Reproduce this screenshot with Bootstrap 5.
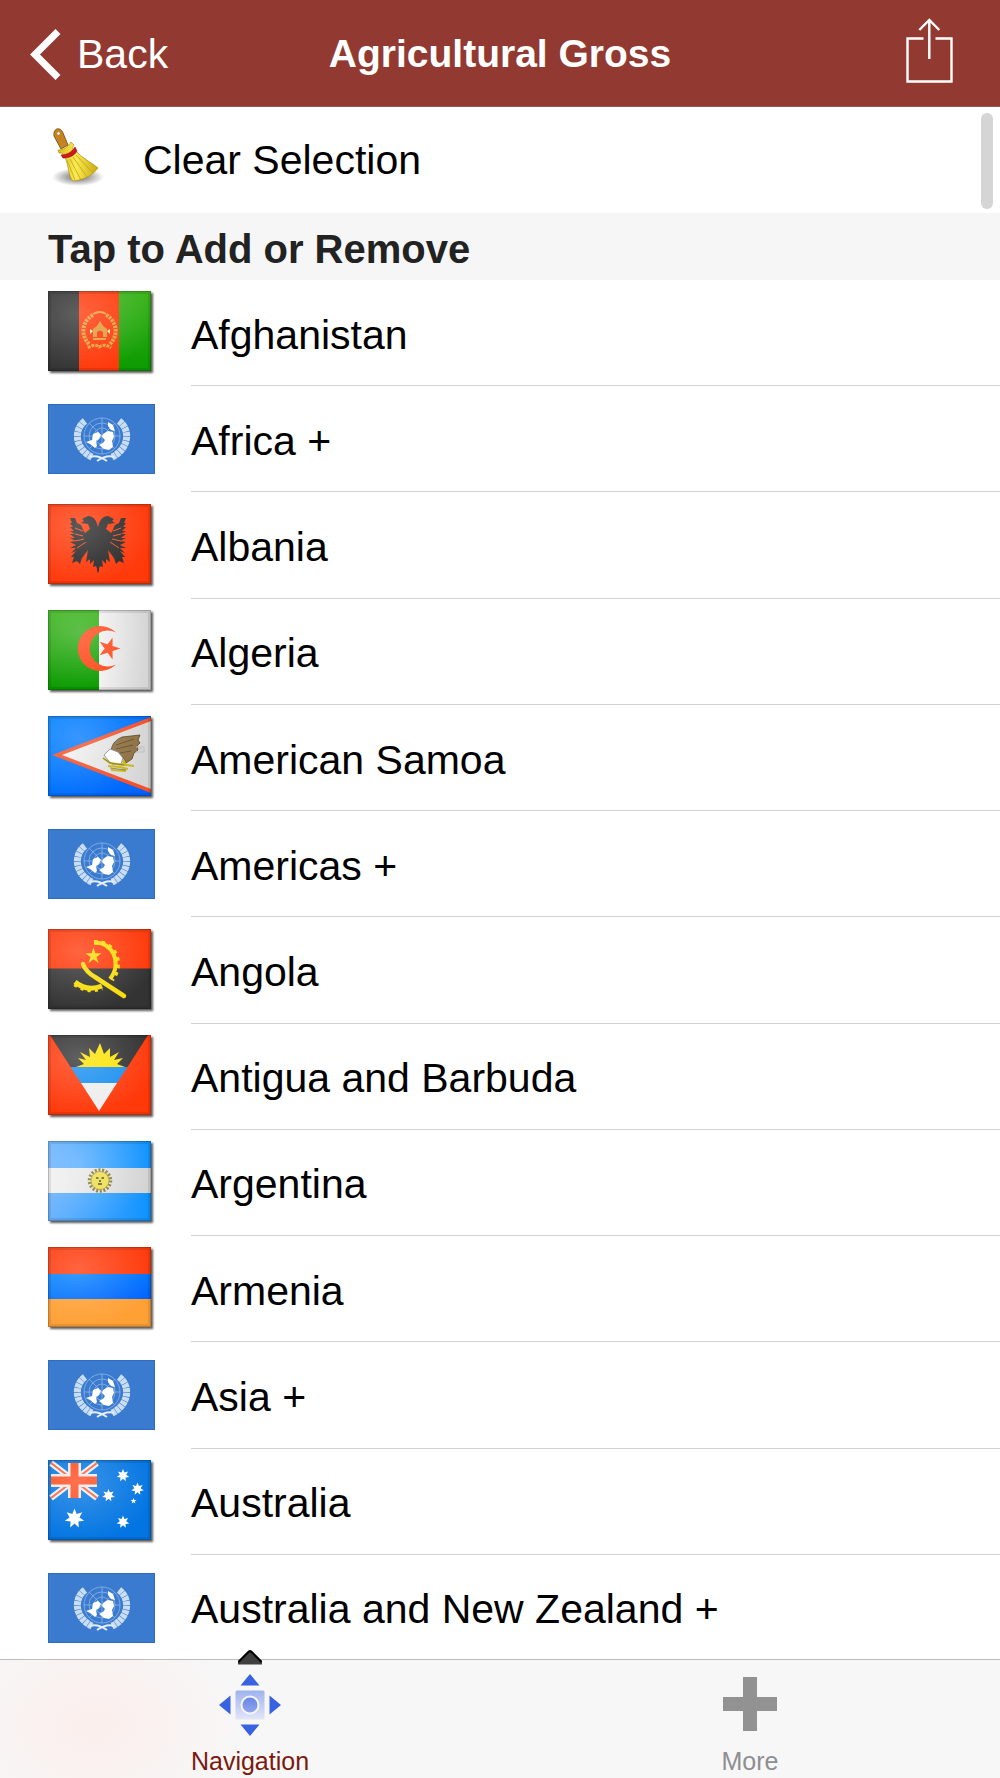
<!DOCTYPE html>
<html lang="en">
<head>
<meta charset="utf-8">
<meta name="viewport" content="width=device-width, initial-scale=1">
<title>Agricultural Gross</title>
<link href="https://cdn.jsdelivr.net/npm/bootstrap@5.3.0/dist/css/bootstrap.min.css" rel="stylesheet">
<style>
  body { font-family: "Liberation Sans", Arial, sans-serif; font-size: 41px; line-height: 48px; color: #000; background: #fff; padding-bottom: 117px; }
  .top-bar { height: 107px; background: #923a31; border-bottom: 1px solid #8f5a53; padding: 2px 30px 0; }
  .top-bar a, .top-bar button { color: #fff; }
  .top-bar h1 { font-size: 39px; line-height: 48px; color: #fff; }
  .share-button { margin: 0 17px 6px 0; }
  .clear-row { height: 106px; padding: 0 48px; gap: 36px; font: inherit; }
  .clear-row svg { margin-left: 4px; }
  .scroll-thumb { top: 6px; right: 7px; width: 12px; height: 96px; background: #d5d5d5; }
  .section-title { height: 67px; padding: 4px 48px 0; background: #f6f6f6; color: #222; font-size: 40px; line-height: 48px; }
  .country { gap: 36px; padding: 0 0 0 48px; min-height: 92px; border: 0; color: #000; background: #fff; }
  .country-name { padding-top: 4px; border-bottom: 1px solid #d2d1d5; }
  .flag { width: 107px; height: 84px; }
  .flag-art { filter: drop-shadow(2px 2px 1px rgba(0,0,0,.65)); }
  .tab-bar { background: radial-gradient(ellipse 150px 110px at 95px 65px, #fbeeec, rgba(251,238,236,0)), #f7f7f7; border-top: 1px solid #bcbcbc; }
  .tab-item { padding: 14px 0 2px; gap: 10px; font-size: 25px; line-height: 30px; color: #8e8e93; }
  .tab-item.active { color: #7b1a10; }
  .tab-caret { top: -10px; left: 50%; margin-left: -12px; }
</style>
<script src="https://cdn.jsdelivr.net/npm/bootstrap@5.3.0/dist/js/bootstrap.bundle.min.js"></script>
</head>
<body class="d-flex flex-column min-vh-100">

<!-- Shared flag parts -->
<svg width="0" height="0" class="position-absolute" aria-hidden="true">
  <defs>
    <radialGradient id="shine" cx=".3" cy=".28" r=".75">
      <stop offset="0" stop-color="#fff" stop-opacity=".22"/><stop offset="1" stop-color="#fff" stop-opacity="0"/>
    </radialGradient>
    <linearGradient id="greenFill" x1="0" y1="0" x2="0" y2="1"><stop offset="0" stop-color="#3cb41c"/><stop offset="1" stop-color="#0a9a00"/></linearGradient>
    <linearGradient id="skyFill"><stop offset="0" stop-color="#6db4ff"/><stop offset="1" stop-color="#0d92ff"/></linearGradient>
    <linearGradient id="blueFill" x1="0" y1="0" x2="1" y2="1"><stop offset="0" stop-color="#0082ff"/><stop offset="1" stop-color="#0062ff"/></linearGradient>
    <linearGradient id="silverFill"><stop offset="0" stop-color="#f2f2f2"/><stop offset="1" stop-color="#d2d2d2"/></linearGradient>
    <symbol id="gloss" viewBox="0 0 103 80">
      <rect width="103" height="80" fill="url(#shine)"/>
      <rect x="1.5" y="1.5" width="100" height="77" fill="none" stroke="#000" stroke-opacity=".09" stroke-width="3"/>
      <rect x=".5" y=".5" width="102" height="79" fill="none" stroke="#000" stroke-opacity=".18"/>
    </symbol>
    <polygon id="star5" points="0,-10 2.2,-3.1 9.5,-3.1 3.6,1.2 5.9,8.1 0,3.8 -5.9,8.1 -3.6,1.2 -9.5,-3.1 -2.2,-3.1"/>
    <polygon id="star7" points="0,-10 2.2,-4.5 7.8,-6.2 4.9,-1.1 9.7,2.2 3.9,3.1 4.3,9 0,5 -4.3,9 -3.9,3.1 -9.7,2.2 -4.9,-1.1 -7.8,-6.2 -2.2,-4.5"/>
    <symbol id="un" viewBox="0 0 107 84">
      <rect y="7" width="107" height="70" fill="#3a7bd0"/>
      <rect x=".5" y="7.500" width="106" height="69" fill="none" stroke="#2f6cc0"/>
      <g fill="none" stroke="#a9c8ee" stroke-width=".8" opacity=".75">
        <circle cx="54" cy="39" r="18"/><circle cx="54" cy="39" r="13"/><circle cx="54" cy="39" r="8"/>
        <path d="M36 39h36M54 21v36M41 26l26 26M67 26L41 52"/>
      </g>
      <g fill="none" stroke="#e3eefb">
        <path d="M37 24C25 33 27 52 44 60M71 24C83 33 81 52 64 60" stroke-width="7" stroke-dasharray="4 .5" opacity=".85"/>
        <path d="M42 60c6-2 11 0 17 4M66 60c-6-2-11 0-17 4" stroke-width="2"/>
      </g>
      <path fill="#fff" d="M38 45l6-2 1-6 5-2 3 3-2 4-3 2 1 5-2 2-5-4zM55 37l5-3 5 1 1 5-2 4 1 6-4 3-5-1-5-4 4-2 2-3-3-3zM60 25l5 3 2 6-4-1-3-4z"/>
    </symbol>
  </defs>
</svg>

<header class="top-bar d-flex align-items-center">
  <div class="col d-flex">
    <a href="#" class="d-flex align-items-center text-decoration-none">
      <svg width="31" height="51" viewBox="0 0 31 51" fill="none" stroke="#fff" stroke-width="7" aria-hidden="true"><path d="M28 2.500L5 25.500 28 48.500"/></svg>
      <span class="ms-3 ps-0">Back</span>
    </a>
  </div>
  <h1 class="fw-bold m-0 text-nowrap">Agricultural Gross</h1>
  <div class="col d-flex justify-content-end">
    <button type="button" class="share-button btn p-0 border-0 d-flex" aria-label="Share">
      <svg width="47" height="66" viewBox="0 0 47 66" fill="none" stroke="#fff" stroke-width="2.400"><path d="M17.500 20.500H1.500V63.500H45.500V20.500H29.500M23.300 41V2M13.300 12L23.300 2l10 10"/></svg>
    </button>
  </div>
</header>

<div class="position-relative">
  <button type="button" class="clear-row btn rounded-0 border-0 w-100 d-flex align-items-center text-start bg-white text-black">
    <svg width="55" height="64" viewBox="0 0 55 64" aria-hidden="true">
      <defs>
        <radialGradient id="floor"><stop offset="0" stop-color="#000" stop-opacity=".6"/><stop offset="1" stop-color="#000" stop-opacity="0"/></radialGradient>
        <linearGradient id="straw"><stop offset="0" stop-color="#d9bd17"/><stop offset=".45" stop-color="#fbea50"/><stop offset="1" stop-color="#c8a90c"/></linearGradient>
      </defs>
      <ellipse cx="26" cy="49" rx="26" ry="9" fill="url(#floor)"/>
      <path d="M2 8C1 -1 9 -1 11 5l5 12-7 4z" fill="#c58424" stroke="#8b5a14"/>
      <circle cx="6.500" cy="5.500" r="1.300" fill="#fff"/>
      <path d="M6 22c6 0 10-3 13-8l3 3-2 3 5 4c5 6 14 10 21 16-5 7-14 12-25 13-5-5-4-15-8-24l-3-4H7z" fill="url(#straw)" stroke="#b0921a" stroke-width=".7"/>
      <path d="M9 27c6 0 11-3 14-8l2 4c-3 5-8 7-14 7z" fill="#d3161c" stroke="#8e0d10" stroke-width=".6"/>
      <path d="M15 32l8 20M18 31l11 21M21 29l14 20M24 27l17 18" stroke="#b99c18" stroke-width=".7" fill="none"/>
    </svg>
    <span>Clear Selection</span>
  </button>
  <div class="scroll-thumb position-absolute rounded-pill"></div>
</div>

<h2 class="section-title fw-bold m-0 d-flex align-items-center">Tap to Add or Remove</h2>

<main class="list-group list-group-flush rounded-0 flex-fill">
  <button type="button" class="country list-group-item list-group-item-action d-flex flex-fill align-items-center">
    <svg class="flag flag-art flex-shrink-0" viewBox="0 0 107 84" aria-hidden="true">
      <rect width="32" height="80" fill="#333"/><rect x="31" width="41" height="80" fill="#ff390a"/><rect x="71" width="32" height="80" fill="url(#greenFill)"/>
      <g fill="none" stroke="#e3a13c">
        <path d="M41 53c-9-9-7-23 4-29M62 53c9-9 7-23-4-29" stroke-width="4" stroke-dasharray="2.500 1"/>
        <path d="M45 23q7-4 13 0" stroke-width="2"/><path d="M40 57q6-5 11-1 6-4 12 1" stroke-width="3" stroke-dasharray="3 1"/>
        <path d="M45 48h13M46 40h3M55 40h3" stroke-width="2"/>
      </g>
      <path d="M45 46v-8l4-3 3-5 3 5 4 3v8h-4v-5q-3-3-6 0v5z" fill="#df9d3b"/><path d="M42 38l3 2-3 3zM62 38l-3 2 3 3z" fill="#ffe9a0"/>
      <use href="#gloss" width="103" height="80"/>
    </svg>
    <span class="country-name flex-fill align-self-stretch d-flex align-items-center">Afghanistan</span>
  </button>
  <button type="button" class="country list-group-item list-group-item-action d-flex flex-fill align-items-center">
    <svg class="flag flex-shrink-0" aria-hidden="true"><use href="#un"/></svg>
    <span class="country-name flex-fill align-self-stretch d-flex align-items-center">Africa +</span>
  </button>
  <button type="button" class="country list-group-item list-group-item-action d-flex flex-fill align-items-center">
    <svg class="flag flag-art flex-shrink-0" viewBox="0 0 107 84" aria-hidden="true">
      <rect width="103" height="80" fill="#ff390a"/>
      <g id="wing" fill="#2b2b2b">
        <path d="M50 24c-1-8-5-12-10-12l-6 3 2 2-3 2 7 1 2 5-5 4c-2-2-2-5-4-8l-4-2-2-5-5 0 2 5h-2l3 4h-3l4 4h-4l5 3h-5l5 4h-5l6 3-6 1 6 3-6 3 6 0-5 5 5-2-5 6 3 0-2 6 5-2 3 3 2-6 6-8-2 12 4-3 0 5 4-4-1 7 3-1 3 7V22z"/>
      </g>
      <use href="#wing" transform="translate(100 0) scale(-1 1)"/>
      <path d="M27 24l8 3M27 30l8 2M27 37l9-2M29 44l9-6M73 24l-8 3M73 30l-8 2M73 37l-9-2M71 44l-9-6" stroke="#ff4a1c" stroke-width="1"/>
      <use href="#gloss" width="103" height="80"/>
    </svg>
    <span class="country-name flex-fill align-self-stretch d-flex align-items-center">Albania</span>
  </button>
  <button type="button" class="country list-group-item list-group-item-action d-flex flex-fill align-items-center">
    <svg class="flag flag-art flex-shrink-0" viewBox="0 0 107 84" aria-hidden="true">
      <rect width="52" height="80" fill="url(#greenFill)"/><rect x="51" width="52" height="80" fill="url(#silverFill)"/>
      <path d="M68 22.500A22.500 22.500 0 1 0 68 54.500A18 18 0 1 1 68 22.500z" fill="#ff4a1c"/>
      <use href="#star5" transform="translate(61 38.500) rotate(90) scale(1.150)" fill="#ff4a1c"/>
      <use href="#gloss" width="103" height="80"/>
    </svg>
    <span class="country-name flex-fill align-self-stretch d-flex align-items-center">Algeria</span>
  </button>
  <button type="button" class="country list-group-item list-group-item-action d-flex flex-fill align-items-center">
    <svg class="flag flag-art flex-shrink-0" viewBox="0 0 107 84" aria-hidden="true">
      <rect width="103" height="80" fill="url(#blueFill)"/>
      <path d="M103 1L4 39l99 38z" fill="#f4502a"/><path d="M103 5L14 39l89 34z" fill="url(#silverFill)"/>
      <path d="M63 35q1-10 11-14l18-2-2 5 2 3-3 3 1 4-4 3-2 6-6 4-3-6-7-2z" fill="#8b6d3d" stroke="#4d3b20" stroke-width=".8"/>
      <path d="M68 29l18-6M68 33l17-4M72 37l11-2" stroke="#5c4a2a" stroke-width="1"/>
      <path d="M56 39l6-6 8 3 5 6-2 6-8 1-5-5z" fill="#fff" stroke="#777" stroke-width=".8"/>
      <path d="M55 42l7 5 14 2-1-5 3 5 8 1M60 50l12 1 8 2M63 54l15 1" fill="none" stroke="#c8b514" stroke-width="2"/>
      <path d="M55 42l7 5 14 2M62 52l16 2" fill="none" stroke="#665b1c" stroke-width=".7"/>
      <path d="M88 31h8v5h-8M90 33h4" fill="none" stroke="#bdbdbd"/>
      <use href="#gloss" width="103" height="80"/>
    </svg>
    <span class="country-name flex-fill align-self-stretch d-flex align-items-center">American Samoa</span>
  </button>
  <button type="button" class="country list-group-item list-group-item-action d-flex flex-fill align-items-center">
    <svg class="flag flex-shrink-0" aria-hidden="true"><use href="#un"/></svg>
    <span class="country-name flex-fill align-self-stretch d-flex align-items-center">Americas +</span>
  </button>
  <button type="button" class="country list-group-item list-group-item-action d-flex flex-fill align-items-center">
    <svg class="flag flag-art flex-shrink-0" viewBox="0 0 107 84" aria-hidden="true">
      <rect width="103" height="40" fill="#ff390a"/><rect y="39.500" width="103" height="40.500" fill="#333"/>
      <g fill="none" stroke="#f8dc0a">
        <path d="M46 14C64 12 75 34 62 50" stroke-width="4"/><path d="M46 13C66 11 78 34 64 51" stroke-width="4" stroke-dasharray="3.500 4"/>
        <path d="M27 53q12 10 27 4" stroke-width="5"/><path d="M27 55q12 9 27 4" stroke-width="5" stroke-dasharray="3 4"/>
        <path d="M35 35q3 8 12 13l29 19" stroke-width="4.500" stroke-linecap="round"/>
      </g>
      <use href="#star5" transform="translate(45.500 27) scale(.85)" fill="#f8dc0a"/>
      <use href="#gloss" width="103" height="80"/>
    </svg>
    <span class="country-name flex-fill align-self-stretch d-flex align-items-center">Angola</span>
  </button>
  <button type="button" class="country list-group-item list-group-item-action d-flex flex-fill align-items-center">
    <svg class="flag flag-art flex-shrink-0" viewBox="0 0 107 84" aria-hidden="true">
      <rect width="103" height="80" fill="#ff390a"/>
      <path d="M2 0h98L79.500 32h-57z" fill="#333"/><path d="M22.500 32h57L69 48H33z" fill="#1a8ff0"/><path d="M33 48h36L51 76z" fill="#eee"/>
      <path d="M28 32l8-3-6-6 8 2-6-8 10 5-1-9 6 6 5-11 4 11 6-6 0 9 9-5-5 8 9-2-6 6 8 3z" fill="#fde308"/>
      <use href="#gloss" width="103" height="80"/>
    </svg>
    <span class="country-name flex-fill align-self-stretch d-flex align-items-center">Antigua and Barbuda</span>
  </button>
  <button type="button" class="country list-group-item list-group-item-action d-flex flex-fill align-items-center">
    <svg class="flag flag-art flex-shrink-0" viewBox="0 0 107 84" aria-hidden="true">
      <rect width="103" height="80" fill="url(#skyFill)"/><rect y="27" width="103" height="25" fill="url(#silverFill)"/>
      <circle cx="52" cy="39.500" r="10.500" fill="none" stroke="#8a7a2c" stroke-width="3.500" stroke-dasharray="2 1.660"/>
      <circle cx="52" cy="39.500" r="9" fill="#ecdf4e" stroke="#a3912c" stroke-width=".8"/>
      <path d="M48 37h2.500M53.500 37h2.500M52 39v2M50 43h4" stroke="#4b4420" stroke-width="1.600"/>
      <use href="#gloss" width="103" height="80"/>
    </svg>
    <span class="country-name flex-fill align-self-stretch d-flex align-items-center">Argentina</span>
  </button>
  <button type="button" class="country list-group-item list-group-item-action d-flex flex-fill align-items-center">
    <svg class="flag flag-art flex-shrink-0" viewBox="0 0 107 84" aria-hidden="true">
      <rect width="103" height="80" fill="#ff390a"/><rect y="27" width="103" height="26" fill="url(#blueFill)"/><rect y="52" width="103" height="28" fill="#ffa035"/>
      <use href="#gloss" width="103" height="80"/>
    </svg>
    <span class="country-name flex-fill align-self-stretch d-flex align-items-center">Armenia</span>
  </button>
  <button type="button" class="country list-group-item list-group-item-action d-flex flex-fill align-items-center">
    <svg class="flag flex-shrink-0" aria-hidden="true"><use href="#un"/></svg>
    <span class="country-name flex-fill align-self-stretch d-flex align-items-center">Asia +</span>
  </button>
  <button type="button" class="country list-group-item list-group-item-action d-flex flex-fill align-items-center">
    <svg class="flag flag-art flex-shrink-0" viewBox="0 0 107 84" aria-hidden="true">
      <rect width="103" height="80" fill="#0068d8"/><rect width="103" height="80" fill="#0a9cff" opacity=".25"/>
      <g fill="none">
        <path d="M3 3l46 35M49 3L3 38" stroke="#e8eef8" stroke-width="6"/><path d="M3 3l46 35M49 3L3 38" stroke="#ff5a2c" stroke-width="2"/>
        <path d="M26.500 3v35M3 20.500h46" stroke="#f1e6e6" stroke-width="13"/><path d="M26.500 3v35M3 20.500h46" stroke="#ff4a1c" stroke-width="8"/>
      </g>
      <g fill="#fff">
        <use href="#star7" transform="translate(26.500 58.500)"/>
        <use href="#star7" transform="translate(75 15.500) scale(.65)"/><use href="#star7" transform="translate(89.500 29) scale(.65)"/>
        <use href="#star7" transform="translate(60.500 35.500) scale(.65)"/><use href="#star7" transform="translate(75 62) scale(.65)"/>
        <use href="#star5" transform="translate(85.500 41) scale(.32)"/>
      </g>
      <use href="#gloss" width="103" height="80"/>
    </svg>
    <span class="country-name flex-fill align-self-stretch d-flex align-items-center">Australia</span>
  </button>
  <button type="button" class="country list-group-item list-group-item-action d-flex flex-fill align-items-center">
    <svg class="flag flex-shrink-0" aria-hidden="true"><use href="#un"/></svg>
    <span class="country-name flex-fill align-self-stretch d-flex align-items-center">Australia and New Zealand +</span>
  </button>
</main>

<nav class="tab-bar fixed-bottom d-flex">
  <a href="#" class="tab-item active col position-relative d-flex flex-column align-items-center text-decoration-none" aria-current="page">
    <svg class="tab-caret position-absolute" width="24" height="15" viewBox="0 0 24 15" aria-hidden="true"><path d="M0 14.500V11L10 1q2-2 4 0l10 10v3.500z" fill="#404040"/><path d="M.5 12L10.500 2q1.500-1.500 3 0l10 10" fill="none" stroke="#000" stroke-width="2"/></svg>
    <svg width="62" height="62" viewBox="0 0 62 62" aria-hidden="true">
      <defs><linearGradient id="pad" x1="0" y1="0" x2="0" y2="1"><stop offset="0" stop-color="#9eb2ee"/><stop offset="1" stop-color="#e3e7f6"/></linearGradient>
      <linearGradient id="knob" x1="0" y1="0" x2="0" y2="1"><stop offset="0" stop-color="#6583e6"/><stop offset="1" stop-color="#92a8ec"/></linearGradient></defs>
      <path d="M31 0l9.500 11.500h-19zM31 62l9.500-11.500h-19zM0 31l11.500-9.500v19zM62 31l-11.500-9.500v19z" fill="#3862e2"/>
      <rect x="16.500" y="16.500" width="29" height="29" rx="1.500" fill="url(#pad)"/>
      <circle cx="31" cy="31" r="8.500" fill="url(#knob)" stroke="#f4f5fa" stroke-width="2"/>
    </svg>
    <span>Navigation</span>
  </a>
  <a href="#" class="tab-item col d-flex flex-column align-items-center text-decoration-none">
    <svg width="62" height="62" viewBox="0 0 62 62" aria-hidden="true"><path d="M24 3h14v20h20v14H38v20H24V37H4V23h20z" fill="#929292"/></svg>
    <span>More</span>
  </a>
</nav>
</body>
</html>
